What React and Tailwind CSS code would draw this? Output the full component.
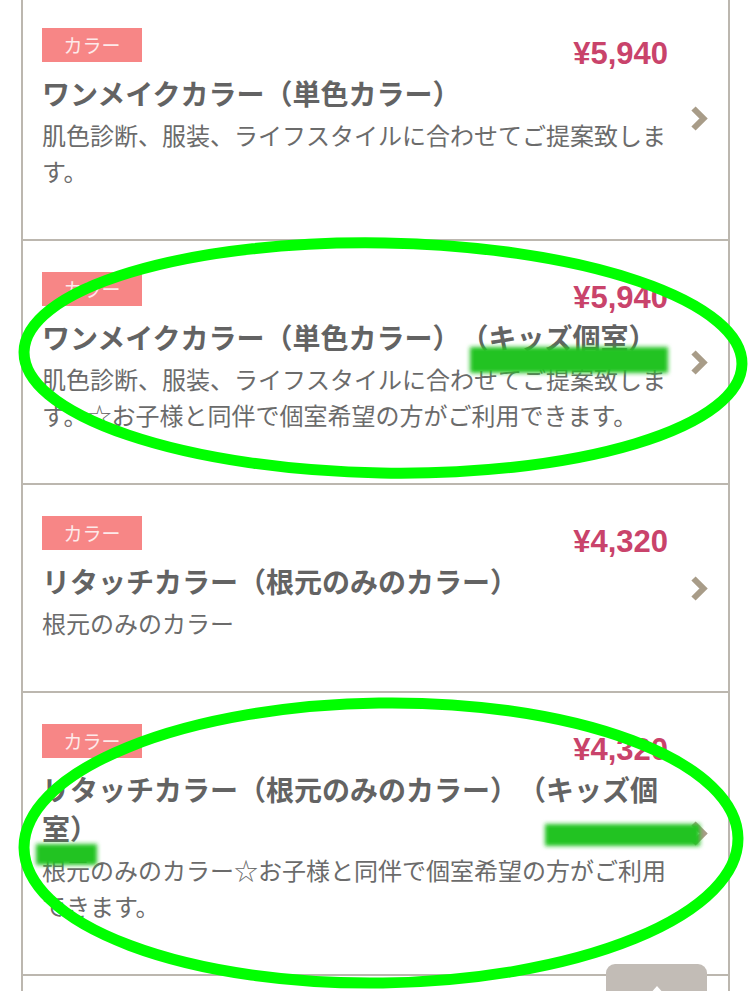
import React from "react";

const items = [
  {
    price: "¥5,940",
    title: "ワンメイクカラー（単色カラー）",
    desc: "肌色診断、服装、ライフスタイルに合わせてご提案致します。",
  },
  {
    price: "¥5,940",
    title: "ワンメイクカラー（単色カラー）（キッズ個室）",
    desc: "肌色診断、服装、ライフスタイルに合わせてご提案致します。☆お子様と同伴で個室希望の方がご利用できます。",
  },
  {
    price: "¥4,320",
    title: "リタッチカラー（根元のみのカラー）",
    desc: "根元のみのカラー",
  },
  {
    price: "¥4,320",
    title: "リタッチカラー（根元のみのカラー）（キッズ個室）",
    desc: "根元のみのカラー☆お子様と同伴で個室希望の方がご利用できます。",
  },
];

const jp = { fontFamily: '"Noto Sans CJK JP", "Noto Sans", sans-serif' };
const lat = { fontFamily: '"Liberation Sans", Arial, sans-serif' };

function Chevron() {
  return (
    <svg width="18" height="27" viewBox="0 0 18 27" className="block">
      <path
        d="M3.5 3.5 L13.5 13.5 L3.5 23.5"
        fill="none"
        stroke="#a89c88"
        strokeWidth="6"
        strokeLinejoin="miter"
      />
    </svg>
  );
}

function Item({ price, title, desc }) {
  return (
    <div className="flex items-center border-b-2 border-[#bcb7af] pl-[19px] pr-[20px]">
      <div className="w-[626px] pt-[31px] pb-[50px]">
        <div className="flex items-start justify-between">
          <div
            className="flex h-[34px] w-[100px] items-center justify-center bg-[#f78686] text-[19px] text-[#fdeaea]"
            style={jp}
          >
            カラー
          </div>
          <div
            className="mt-[7px] text-[31px] font-bold leading-[37px] text-[#c9436b]"
            style={lat}
          >
            {price}
          </div>
        </div>
        <div
          className="mt-[2px] text-[28px] font-bold leading-[39px] text-[#636363]"
          style={jp}
        >
          {title}
        </div>
        <div
          className="mt-[4px] text-[24px] leading-[36px] text-[#6b6b6b]"
          style={jp}
        >
          {desc}
        </div>
      </div>
      <div className="ml-[22px] w-[18px]">
        <Chevron />
      </div>
    </div>
  );
}

export default function App() {
  return (
    <div className="relative h-[991px] w-[750px] overflow-hidden bg-white [text-spacing-trim:space-all] [font-feature-settings:'halt'_0,'chws'_0]">
      <div className="ml-[21px] -mt-[3px] w-[709px] border-x-2 border-[#bcb7af]">
        {items.map((it, i) => (
          <Item key={i} {...it} />
        ))}
        <div className="h-[40px]" />
      </div>

      <div className="absolute left-[606px] top-[964px] flex h-[50px] w-[101px] justify-center rounded-[9px] bg-[#c2bcb6]">
        <svg width="20" height="14" viewBox="0 0 20 14" className="mt-[21px]">
          <path d="M10 1 L18 10 L2 10 Z" fill="#ffffff" />
        </svg>
      </div>

      <svg
        className="pointer-events-none absolute left-0 top-0"
        width="750"
        height="991"
        viewBox="0 0 750 991"
      >
        <defs>
          <filter id="smudge" x="-20%" y="-50%" width="140%" height="200%">
            <feGaussianBlur stdDeviation="2.2" />
          </filter>
        </defs>
        <rect x="470" y="347" width="198" height="26" fill="#22c322" filter="url(#smudge)" />
        <rect x="545" y="824" width="155" height="22" fill="#22c322" filter="url(#smudge)" />
        <rect x="36" y="844" width="61" height="21" fill="#22c322" filter="url(#smudge)" />
        <ellipse
          cx="383"
          cy="358"
          rx="359"
          ry="115"
          fill="none"
          stroke="#00ff00"
          strokeWidth="11"
          transform="rotate(1 383 358)"
        />
        <ellipse
          cx="381"
          cy="843"
          rx="357"
          ry="140"
          fill="none"
          stroke="#00ff00"
          strokeWidth="11"
          transform="rotate(-0.8 381 843)"
        />
      </svg>
    </div>
  );
}
